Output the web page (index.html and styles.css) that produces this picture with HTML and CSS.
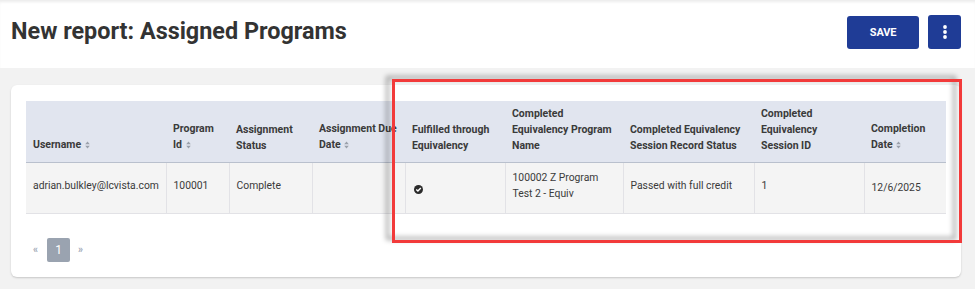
FILE: index.html
```html
<!DOCTYPE html>
<html>
<head>
<meta charset="utf-8">
<link rel="stylesheet" href="styles.css">
</head>
<body>
<header class="topbar">
  <h1 class="title">New report: Assigned Programs</h1>
  <div class="actions">
    <button class="btn btn-save">SAVE</button>
    <button class="btn btn-more" aria-label="More">
      <svg width="6" height="14" viewBox="0 0 6 14"><circle cx="3" cy="2" r="1.9" fill="#fff"/><circle cx="3" cy="7" r="1.9" fill="#fff"/><circle cx="3" cy="12" r="1.9" fill="#fff"/></svg>
    </button>
  </div>
</header>
<main class="content">
  <section class="card">
    <table class="report">
      <colgroup>
        <col style="width:140px"><col style="width:63px"><col style="width:83px"><col style="width:93px"><col style="width:100px"><col style="width:118px"><col style="width:131px"><col style="width:110px"><col style="width:82px">
      </colgroup>
      <thead>
        <tr>
          <th>Username <span class="sort"><svg width="5" height="8" viewBox="0 0 5 8"><path d="M2.5 0.5 L4.8 3.3 H0.2 Z M2.5 7.5 L4.8 4.7 H0.2 Z" fill="#9aa0aa"/></svg></span></th>
          <th>Program<br>Id <span class="sort"><svg width="5" height="8" viewBox="0 0 5 8"><path d="M2.5 0.5 L4.8 3.3 H0.2 Z M2.5 7.5 L4.8 4.7 H0.2 Z" fill="#9aa0aa"/></svg></span></th>
          <th>Assignment<br>Status</th>
          <th class="nowrap">Assignment Due<br>Date <span class="sort"><svg width="5" height="8" viewBox="0 0 5 8"><path d="M2.5 0.5 L4.8 3.3 H0.2 Z M2.5 7.5 L4.8 4.7 H0.2 Z" fill="#9aa0aa"/></svg></span></th>
          <th>Fulfilled through<br>Equivalency</th>
          <th class="nowrap">Completed<br>Equivalency Program<br>Name</th>
          <th class="nowrap">Completed Equivalency<br>Session Record Status</th>
          <th>Completed<br>Equivalency<br>Session ID</th>
          <th>Completion<br>Date <span class="sort"><svg width="5" height="8" viewBox="0 0 5 8"><path d="M2.5 0.5 L4.8 3.3 H0.2 Z M2.5 7.5 L4.8 4.7 H0.2 Z" fill="#9aa0aa"/></svg></span></th>
        </tr>
      </thead>
      <tbody>
        <tr>
          <td>adrian.bulkley@lcvista.com</td>
          <td>100001</td>
          <td>Complete</td>
          <td></td>
          <td class="icon-cell"><svg width="9" height="9" viewBox="0 0 9 9"><circle cx="4.5" cy="4.5" r="4.5" fill="#2b2b2b"/><path d="M2.3 4.6 L3.9 6.1 L6.8 3.1" stroke="#fff" stroke-width="1.4" fill="none"/></svg></td>
          <td>100002 Z Program<br>Test 2 - Equiv</td>
          <td>Passed with full credit</td>
          <td>1</td>
          <td class="date-cell">12/6/2025</td>
        </tr>
      </tbody>
    </table>
    <nav class="pager">
      <span class="pager-arrow prev">«</span>
      <span class="pager-page">1</span>
      <span class="pager-arrow next">»</span>
    </nav>
  </section>
</main>
<div class="highlight"></div>
</body>
</html>
```
FILE: styles.css
```css
html, body {
  margin: 0;
  padding: 0;
}
body {
  font-family: Roboto, "Liberation Sans", sans-serif;
  background: #f2f2f2;
  color: #333;
  width: 975px;
  height: 289px;
  overflow: hidden;
  position: relative;
}
.topbar {
  height: 68px;
  background: #fff;
  box-shadow: inset 0 3px 3px -1px rgba(0,0,0,0.08);
  display: flex;
  align-items: flex-start;
  justify-content: space-between;
  padding: 0 14px 0 11px;
  box-sizing: border-box;
}
.title {
  margin: 16px 0 0 0;
  font-size: 23.4px;
  font-weight: 700;
  color: #333;
  line-height: 30px;
}
.actions {
  display: flex;
  gap: 9px;
  margin-top: 16px;
}
.btn {
  border: none;
  background: #1f3c96;
  color: #fff;
  border-radius: 3px;
  height: 33px;
  font-family: Roboto, "Liberation Sans", sans-serif;
  cursor: pointer;
  display: flex;
  align-items: center;
  justify-content: center;
  padding: 0;
}
.btn-save {
  width: 72px;
  font-size: 11px;
  font-weight: 700;
  letter-spacing: -0.2px;
}
.btn-more {
  width: 33px;
  height: 34px;
  margin-top: -1px;
}
.content {
  padding: 17px 14px 0 11px;
}
.card {
  background: #fff;
  border-radius: 6px;
  box-shadow: 0 1px 2px rgba(0,0,0,0.18);
  padding: 16px 15px 15px 15px;
  width: 920px;
}
.report {
  border-collapse: collapse;
  table-layout: fixed;
  width: 920px;
}
.report th {
  background: #e1e5ef;
  text-align: left;
  vertical-align: bottom;
  font-size: 10.5px;
  font-weight: 700;
  color: #3a3a3a;
  line-height: 16px;
  padding: 5px 7px 8px 7px;
  border-bottom: 1px solid #b9c0cd;
}
.report th.nowrap {
  white-space: nowrap;
}
.sort {
  display: inline-block;
  margin-left: 1px;
  vertical-align: -1px;
}
.report td {
  background: #f4f4f4;
  color: #3a3a3a;
  font-size: 10.35px;
  line-height: 16px;
  padding: 6px 7px 10px 7px;
  height: 34px;
  vertical-align: middle;
  white-space: nowrap;
  border-left: 1px solid #e2e2e6;
  border-bottom: 1px solid #e2e2e6;
}
.report td:first-child {
  border-left: none;
}
.report td.icon-cell {
  padding-top: 9px;
  padding-bottom: 7px;
}
.report td.date-cell {
  padding-top: 8px;
  padding-bottom: 8px;
}
.icon-cell svg {
  display: block;
  margin-left: 1px;
}
.pager {
  display: flex;
  align-items: center;
  margin-top: 24px;
  padding-left: 7px;
}
.pager-arrow {
  color: #a0a9b6;
  font-size: 10px;
  font-weight: 700;
  line-height: 10px;
}
.pager-arrow.prev {
  margin-right: 9px;
}
.pager-arrow.next {
  margin-left: 8px;
}
.pager-page {
  width: 23px;
  height: 24px;
  background: #9aa3b0;
  color: #fff;
  border-radius: 2px;
  font-size: 12px;
  display: flex;
  align-items: center;
  justify-content: center;
}
.highlight {
  position: absolute;
  left: 392px;
  top: 79px;
  width: 564px;
  height: 158px;
  border: 3px solid #f23a3a;
  filter: drop-shadow(-6px -3px 2.5px rgba(0,0,0,0.35));
  pointer-events: none;
}
```
